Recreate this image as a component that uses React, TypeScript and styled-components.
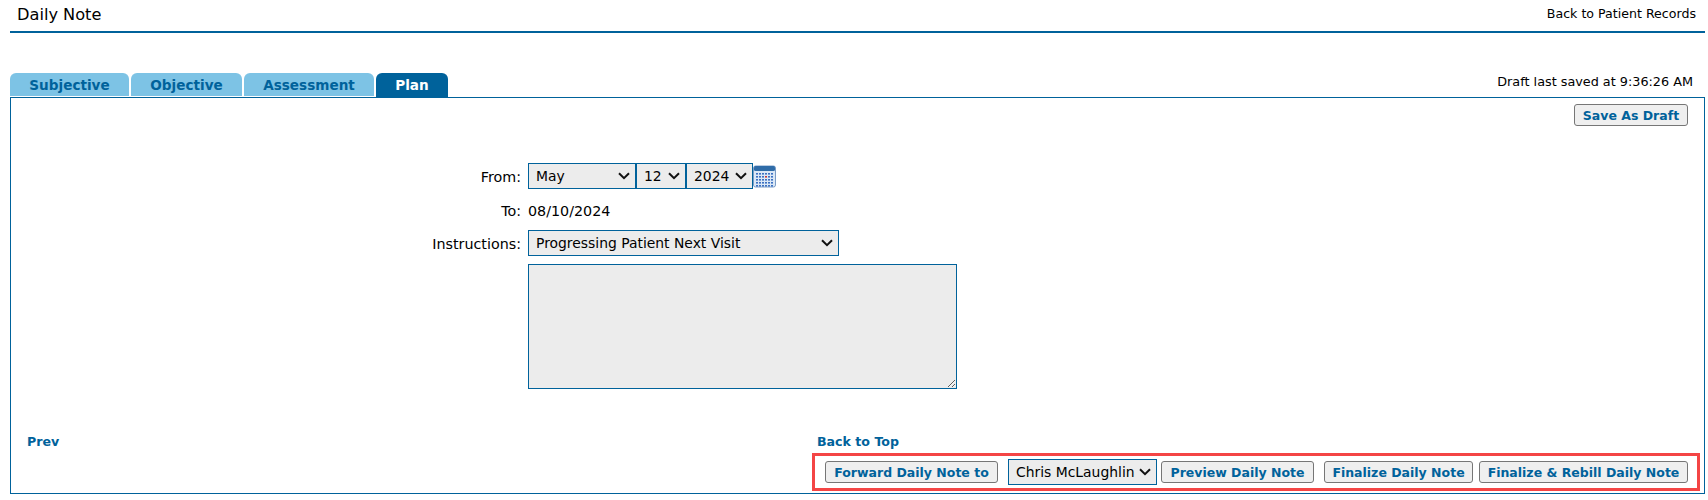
import React from "react";
import styled, { createGlobalStyle } from "styled-components";

const Global = createGlobalStyle`
  html, body { margin: 0; padding: 0; background: #fff; }
  body { font-family: "DejaVu Sans", Verdana, sans-serif; font-size: 14px; color: #000; overflow: hidden; }
  * { box-sizing: border-box; }
`;

const blue = "#00629b";
const chevron =
  "data:image/svg+xml;utf8," +
  encodeURIComponent(
    '<svg xmlns="http://www.w3.org/2000/svg" width="12" height="8" viewBox="0 0 12 8"><path d="M1 1.2l5 5 5-5" fill="none" stroke="#111" stroke-width="2"/></svg>'
  );

const Page = styled.div`
  width: 1708px;
  height: 500px;
  padding-right: 3px;
`;

const Header = styled.header`
  height: 33px;
  margin-left: 10px;
  border-bottom: 2px solid ${blue};
  display: flex;
  justify-content: space-between;
  align-items: flex-start;
`;

const Title = styled.h1`
  margin: 5px 0 0 7px;
  font-size: 16.2px;
  line-height: 19px;
  font-weight: 400;
`;

const BackLink = styled.a`
  margin: 6px 9px 0 0;
  font-size: 12.6px;
  line-height: 16px;
  color: #000;
`;

const TabRow = styled.div`
  margin: 40px 0 0 10px;
  height: 24px;
  display: flex;
  justify-content: space-between;
`;

const Tabs = styled.div`
  display: flex;
  gap: 2px;
`;

const Tab = styled.div<{ $active?: boolean; $w: number }>`
  width: ${(p) => p.$w}px;
  height: ${(p) => (p.$active ? 25 : 23)}px;
  border-radius: 6px 6px 0 0;
  background: ${(p) => (p.$active ? blue : "#7dc3e5")};
  color: ${(p) => (p.$active ? "#fff" : blue)};
  font-size: 13.6px;
  font-weight: 700;
  line-height: 24px;
  text-align: center;
`;

const Saved = styled.div`
  margin: 1px 12px 0 0;
  font-size: 12.8px;
  line-height: 16px;
`;

const Panel = styled.section`
  height: 397px;
  margin-left: 10px;
  border: 1px solid ${blue};
  display: flex;
  flex-direction: column;
`;

const DraftRow = styled.div`
  display: flex;
  justify-content: flex-end;
  padding: 6px 16px 0 0;
`;

const Button = styled.button`
  height: 22px;
  padding: 0;
  border: 1px solid #767676;
  border-radius: 3px;
  background: #efefef;
  color: ${blue};
  font-family: inherit;
  font-size: 12.5px;
  font-weight: 700;
`;

const Form = styled.div`
  margin-top: 37px;
  display: grid;
  grid-template-columns: 510px auto;
  justify-content: start;
  column-gap: 7px;
  align-items: center;
`;

const Label = styled.div`
  padding-top: 2px;
  text-align: right;
  font-size: 14.3px;
  line-height: 18px;
`;

const DateRow = styled.div`
  display: flex;
  align-items: center;
`;

const Select = styled.select<{ $w: number; $ml?: number }>`
  width: ${(p) => p.$w}px;
  height: 26px;
  margin-left: ${(p) => p.$ml ?? 0}px;
  padding: 0 0 0 7px;
  border: 1px solid ${blue};
  border-radius: 0;
  appearance: none;
  background: #ececec url("${chevron}") no-repeat right 5px center;
  color: #000;
  font-family: inherit;
  font-size: 13.9px;
`;

const Value = styled.div`
  height: 41px;
  padding-top: 2px;
  display: flex;
  align-items: center;
  font-size: 14.3px;
`;

const Notes = styled.textarea`
  grid-column: 2;
  width: 429px;
  height: 125px;
  margin-top: 8px;
  border: 1px solid ${blue};
  border-radius: 0;
  background: #ececec;
`;

const BackRow = styled.div`
  margin-top: 44px;
  display: grid;
  grid-template-columns: 790px auto;
  padding-left: 16px;
  font-size: 12.6px;
  line-height: 17px;
  font-weight: 700;
  color: ${blue};
`;

const Actions = styled.div`
  margin: 3px 4px 0 auto;
  width: 888px;
  height: 38px;
  border: 3px solid #f44545;
  display: flex;
  align-items: center;
  padding: 0 9px 0 10px;
`;

const ActionButton = styled(Button)<{ $w: number; $ml: number }>`
  flex: none;
  width: ${(p) => p.$w}px;
  margin-left: ${(p) => p.$ml}px;
`;

const CalendarIcon = styled.svg`
  display: block;
`;

const Calendar = () => (
  <CalendarIcon width="23" height="23" viewBox="0 0 23 23">
    <rect x="0.5" y="1" width="22" height="21" rx="2" fill="#dbe8f6" stroke="#7a9cc6" />
    <rect x="1" y="1" width="21" height="5" rx="1.5" fill="#2f6ca8" />
    {[8, 11, 14, 17, 20].map((y) =>
      [3, 6, 9, 12, 15, 18].map((x) => (
        <rect key={`${x}-${y}`} x={x} y={y} width="2" height="1.6" fill={x === 12 && y === 11 ? "#c8383a" : "#3d71c2"} />
      ))
    )}
  </CalendarIcon>
);

export default function App() {
  return (
    <Page>
      <Global />
      <Header>
        <Title>Daily Note</Title>
        <BackLink>Back to Patient Records</BackLink>
      </Header>
      <TabRow>
        <Tabs>
          <Tab $w={119}>Subjective</Tab>
          <Tab $w={111}>Objective</Tab>
          <Tab $w={130}>Assessment</Tab>
          <Tab $w={72} $active>Plan</Tab>
        </Tabs>
        <Saved>Draft last saved at 9:36:26 AM</Saved>
      </TabRow>
      <Panel>
        <DraftRow>
          <ActionButton $w={114} $ml={0}>Save As Draft</ActionButton>
        </DraftRow>
        <Form>
          <Label>From:</Label>
          <DateRow>
            <Select $w={108} defaultValue="May"><option>May</option></Select>
            <Select $w={50} defaultValue="12"><option>12</option></Select>
            <Select $w={67} defaultValue="2024"><option>2024</option></Select>
            <Calendar />
          </DateRow>
          <Label>To:</Label>
          <Value>08/10/2024</Value>
          <Label>Instructions:</Label>
          <Select $w={311}><option>Progressing Patient Next Visit</option></Select>
          <Notes />
        </Form>
        <BackRow>
          <span>Prev</span>
          <span>Back to Top</span>
        </BackRow>
        <Actions>
          <ActionButton $w={173} $ml={0}>Forward Daily Note to</ActionButton>
          <Select $w={149} $ml={10} defaultValue="c"><option value="c">Chris McLaughlin</option></Select>
          <ActionButton $w={153} $ml={4}>Preview Daily Note</ActionButton>
          <ActionButton $w={149} $ml={10}>Finalize Daily Note</ActionButton>
          <ActionButton $w={209} $ml={6}>Finalize &amp; Rebill Daily Note</ActionButton>
        </Actions>
      </Panel>
    </Page>
  );
}
